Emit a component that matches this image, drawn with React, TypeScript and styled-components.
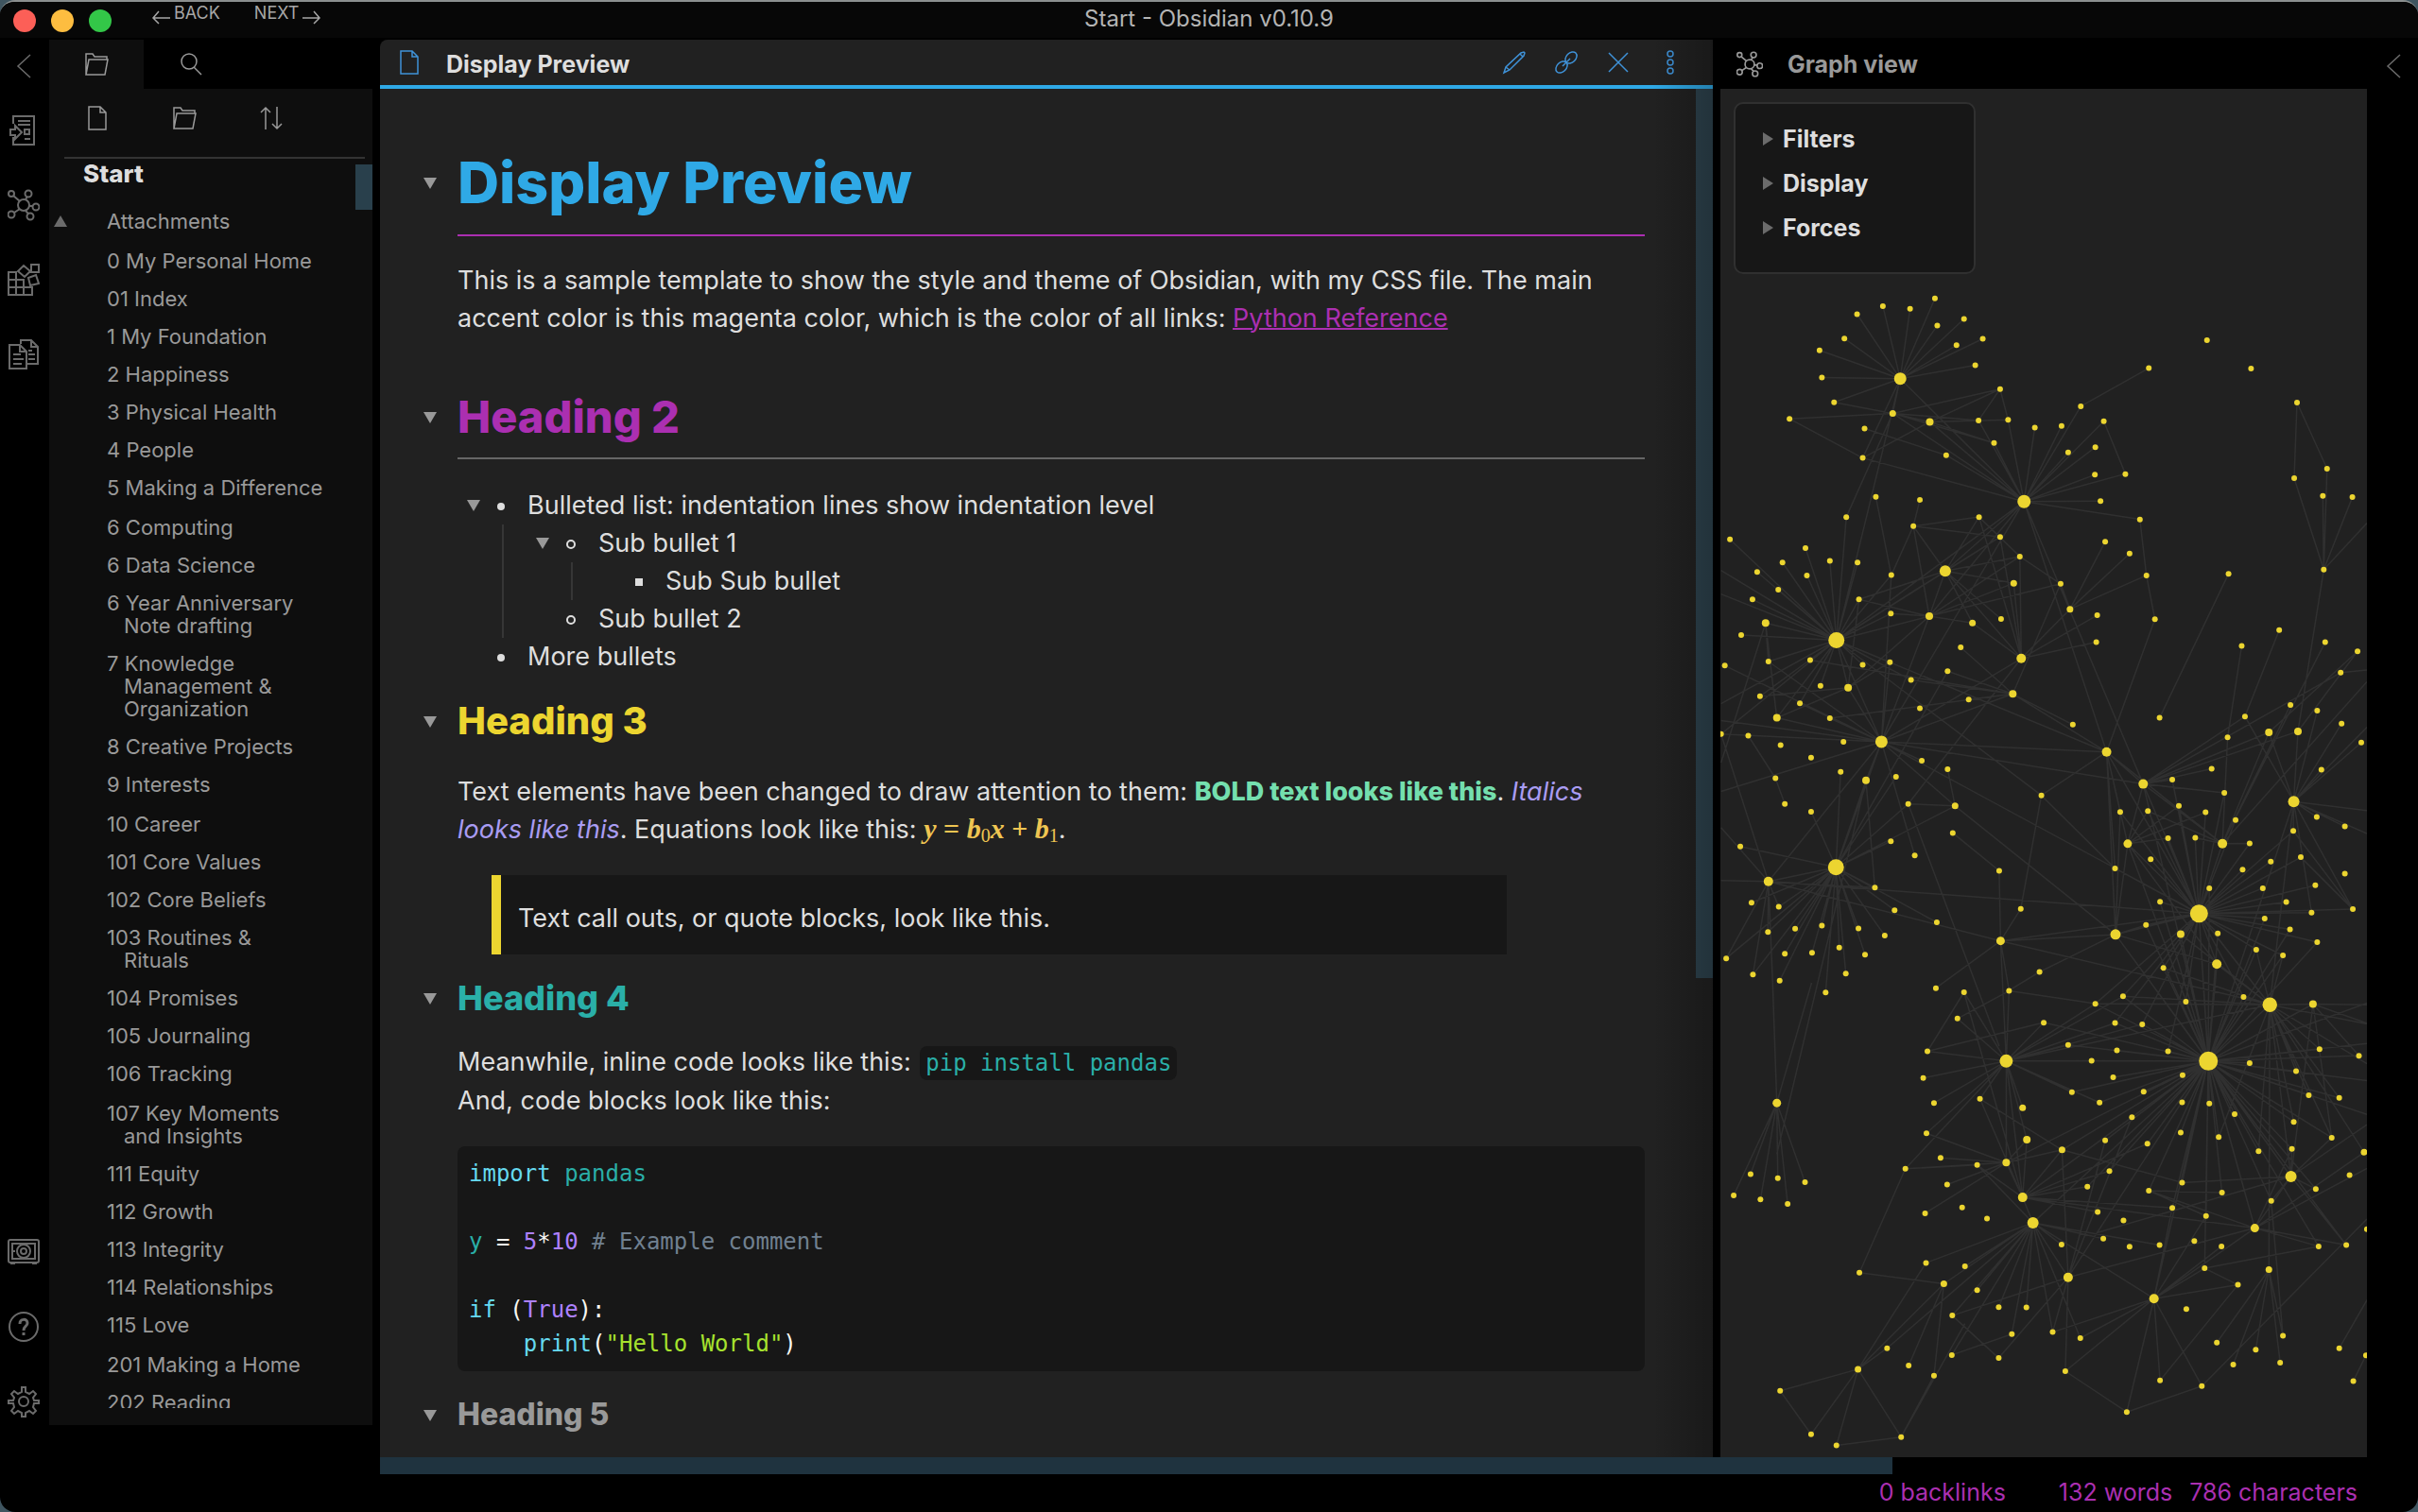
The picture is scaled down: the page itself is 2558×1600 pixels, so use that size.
import React from "react";
import styled, { createGlobalStyle } from "styled-components";

const color = {
  pane: "#212121",
  side: "#0e0e0e",
  inset: "#171717",
  text: "#dedede",
  muted: "#999999",
  icon: "#6b6b6b",
  blue: "#2fa9e6",
  action: "#3f92d8",
  magenta: "#ab2fb1",
  yellow: "#ecd530",
  teal: "#2aafa8",
  thumb: "#293b45",
};

const Global = createGlobalStyle`
  * { box-sizing: border-box; }
  html, body, #root { height: 100%; margin: 0; }
  body {
    background: #3f5560;
    color: ${color.text};
    font-family: Inter, "Noto Sans", sans-serif;
    font-size: 25px;
    overflow: hidden;
  }
  button {
    margin: 0;
    padding: 0;
    border: 0;
    background: none;
    color: inherit;
    font: inherit;
    cursor: pointer;
  }
  svg { display: block; }
`;

/* ---------- window ---------- */

const Window = styled.div`
  display: flex;
  flex-direction: column;
  height: 100vh;
  background: #000;
  border-top: 2px solid #8b8f8f;
  border-radius: 16px;
  overflow: hidden;
`;

const TitleBar = styled.header`
  display: grid;
  grid-template-columns: 1fr auto 1fr;
  height: 38px;
  flex: none;
  background: #070707;
`;

const TitleLeft = styled.div`
  display: flex;
  align-items: flex-start;
  padding-left: 14px;
`;

const Lights = styled.div`
  display: flex;
  gap: 16px;
  padding: 8px 42px 0 0;
`;

const Light = styled.button<{ $fill: string }>`
  width: 24px;
  height: 24px;
  border-radius: 50%;
  background: ${(p) => p.$fill};
`;

const NavButton = styled.button`
  display: flex;
  align-items: flex-start;
  gap: 4px;
  margin-right: 36px;
  color: #a6a6a6;
  font-size: 18px;
  line-height: 24px;
  svg { margin-top: 8px; }
`;

const WindowTitle = styled.div`
  color: #b4b4b4;
  font-size: 24px;
  line-height: 36px;
`;

const Body = styled.div`
  display: flex;
  flex: 1;
  gap: 8px;
  min-height: 0;
  padding-top: 2px;
`;

/* ---------- ribbons and file pane ---------- */

const LeftDock = styled.div`
  display: flex;
  width: 394px;
  flex: none;
`;

const Ribbon = styled.nav`
  display: flex;
  flex-direction: column;
  align-items: center;
  width: 52px;
  flex: none;
  padding: 0 2px 20px 0;
  color: ${color.icon};
`;

const RibbonButton = styled.button`
  display: grid;
  place-items: center;
  width: 100%;
  height: 79px;
`;

const RibbonToggle = styled.button`
  display: grid;
  place-items: center;
  width: 100%;
  height: 56px;
`;

const Spacer = styled.div`
  flex: 1;
`;

const FilePane = styled.aside`
  display: flex;
  flex: 1;
  flex-direction: column;
  min-width: 0;
  margin-bottom: 34px;
  color: ${color.muted};
`;

const Tabs = styled.div`
  display: flex;
  height: 52px;
  flex: none;
`;

const Tab = styled.button<{ $active?: boolean }>`
  display: grid;
  place-items: center;
  width: 100px;
  background: ${(p) => (p.$active ? color.side : "transparent")};
`;

const PaneBody = styled.div`
  display: flex;
  flex: 1;
  flex-direction: column;
  min-height: 0;
  padding-bottom: 18px;
  background: ${color.side};
`;

const PaneTools = styled.div`
  display: flex;
  gap: 66px;
  height: 74px;
  flex: none;
  margin: 0 8px 0 16px;
  padding: 18px 22px 0;
  border-bottom: 2px solid #333;
`;

const Tool = styled.button`
  display: grid;
  place-items: center;
  width: 26px;
  height: 26px;
`;

const FileScroll = styled.div`
  display: flex;
  flex: 1;
  align-items: flex-start;
  min-height: 0;
  overflow: hidden;
`;

const Tree = styled.div`
  flex: 1;
  min-width: 0;
`;

const VaultName = styled.h2`
  margin: 0 0 0 36px;
  color: ${color.text};
  font-size: 26px;
  font-weight: 800;
  line-height: 32px;
`;

const FileList = styled.ul`
  margin: 14px 0 0;
  padding: 0;
  list-style: none;
`;

const FileRow = styled.li`
  display: flex;
  align-items: flex-start;
  padding: 8px 0 8px 5px;
  &:nth-child(13n + 2), &:nth-child(13n + 9) { margin-top: 2px; }
`;

const Twisty = styled.span`
  display: flex;
  align-items: center;
  width: 74px;
  height: 24px;
  flex: none;
  color: ${color.icon};
`;

const FileName = styled.button`
  width: 230px;
  font-size: 22px;
  line-height: 24px;
  text-align: left;
  text-indent: -18px;
  white-space: pre-line;
`;

const SideThumb = styled.div`
  width: 18px;
  height: 48px;
  flex: none;
  margin-top: 6px;
  background: #29404c;
`;

/* ---------- note pane ---------- */

const NotePane = styled.main`
  position: relative;
  display: flex;
  flex: 1;
  flex-direction: column;
  min-width: 0;
  background: ${color.pane};
  border-top-left-radius: 8px;
  overflow: hidden;
`;

const EdgeShade = styled.div`
  position: absolute;
  top: 0;
  right: 0;
  bottom: 0;
  width: 64px;
  background: linear-gradient(90deg, rgba(0, 0, 0, 0), rgba(0, 0, 0, 0.24));
  pointer-events: none;
`;

const NoteHeader = styled.header`
  display: flex;
  align-items: center;
  height: 52px;
  flex: none;
  padding: 0 32px 0 21px;
  border-bottom: 4px solid ${color.blue};
  color: ${color.action};
`;

const NoteTitle = styled.div`
  flex: 1;
  margin-left: 29px;
  padding-top: 4px;
  color: ${color.text};
  font-weight: 700;
  line-height: 32px;
`;

const NoteActions = styled.div`
  display: flex;
  gap: 29px;
`;

const NoteScroll = styled.div`
  display: flex;
  flex: 1;
  min-height: 0;
  overflow: hidden;
`;

const NoteThumb = styled.div`
  width: 18px;
  height: 65%;
  flex: none;
  background: #2d424d;
`;

const Article = styled.article`
  flex: 1;
  min-width: 0;
  padding: 59px 54px 0 82px;
  font-size: 27px;
  line-height: 40px;
`;

const headingStyles = {
  1: { size: 61, line: 80, tone: color.blue, top: 0 },
  2: { size: 47, line: 60, tone: color.magenta, top: 54 },
  3: { size: 40, line: 48, tone: color.yellow, top: 24 },
  4: { size: 36, line: 44, tone: color.teal, top: 24 },
  5: { size: 32, line: 44, tone: color.muted, top: 24 },
};

type Level = keyof typeof headingStyles;

const HeadingRow = styled.div<{ $level: Level }>`
  display: flex;
  align-items: center;
  margin-top: ${(p) => headingStyles[p.$level].top}px;
  margin-left: -36px;
  color: ${(p) => headingStyles[p.$level].tone};
  font-size: ${(p) => headingStyles[p.$level].size}px;
  font-weight: 800;
  line-height: ${(p) => headingStyles[p.$level].line}px;
`;

const HeadingText = styled.div`
  h1, h2, h3, h4, h5 { margin: 0; font: inherit; }
`;

const Fold = styled.button`
  display: flex;
  align-items: center;
  width: 36px;
  flex: none;
  padding-top: 2px;
  color: ${color.muted};
`;

const Rule = styled.hr<{ $tone: string; $gap: number }>`
  height: 2px;
  margin: ${(p) => p.$gap}px 0 0;
  border: 0;
  background: ${(p) => p.$tone};
`;

const Paragraph = styled.p<{ $top: number }>`
  margin: ${(p) => p.$top}px 0 0;
`;

const NoteLink = styled.a`
  color: ${color.magenta};
  text-decoration: underline;
  text-decoration-thickness: 2px;
`;

const Strong = styled.strong`
  color: #74dfae;
  font-weight: 800;
`;

const Em = styled.em`
  color: #a99cf3;
`;

const Equation = styled.span`
  color: #efc552;
  font-family: "Liberation Serif", serif;
  font-size: 30px;
  font-weight: 700;
  line-height: 36px;
  sub { font-size: 20px; font-weight: 400; line-height: 0; vertical-align: -4px; }
`;

const BulletList = styled.ul<{ $root?: boolean }>`
  margin: ${(p) => (p.$root ? "29px 0 0 46px" : "0 0 0 -27px")};
  padding: 0 0 0 ${(p) => (p.$root ? 0 : 70)}px;
  border-left: ${(p) => (p.$root ? 0 : 2)}px solid #363636;
  list-style: none;
`;

const Bullet = styled.li`
  padding-left: 28px;
`;

const BulletLine = styled.div`
  display: flex;
  align-items: center;
  margin-left: -64px;
`;

const BulletFold = styled.button`
  display: flex;
  width: 32px;
  height: 40px;
  align-items: center;
  color: ${color.muted};
`;

const Marker = styled.span<{ $kind: "disc" | "ring" | "square" }>`
  width: ${(p) => (p.$kind === "ring" ? 10 : 8)}px;
  height: ${(p) => (p.$kind === "ring" ? 10 : 8)}px;
  margin: 2px 24px 0 0;
  border: ${(p) => (p.$kind === "ring" ? 2 : 0)}px solid ${color.text};
  border-radius: ${(p) => (p.$kind === "square" ? 0 : 50)}%;
  background: ${(p) => (p.$kind === "ring" ? "transparent" : color.text)};
`;

const Quote = styled.blockquote`
  width: 1074px;
  max-width: 100%;
  margin: 28px 0 0 36px;
  padding: 26px 18px 18px;
  border-left: 10px solid ${color.yellow};
  background: ${color.inset};
`;

const mono = `"DejaVu Sans Mono", monospace`;

const InlineCode = styled.code`
  margin: 0 2px;
  padding: 4px 6px;
  border-radius: 8px;
  background: ${color.inset};
  color: ${color.teal};
  font-family: ${mono};
  font-size: 24px;
`;

const CodeBlock = styled.pre`
  margin: 28px 0 0;
  padding: 11px 12px;
  border-radius: 8px;
  background: ${color.inset};
  color: #f8f8f2;
  font-family: ${mono};
  font-size: 24px;
  line-height: 36px;
`;

const Token = styled.span<{ $tone: string }>`
  color: ${(p) => p.$tone};
`;

/* ---------- graph pane ---------- */

const GraphPane = styled.section`
  display: flex;
  flex-direction: column;
  width: 684px;
  flex: none;
`;

const GraphHeader = styled.header`
  display: flex;
  align-items: center;
  gap: 26px;
  height: 52px;
  flex: none;
  padding-left: 17px;
  color: ${color.muted};
  font-weight: 700;
`;

const GraphCanvas = styled.div`
  position: relative;
  flex: 1;
  min-height: 0;
  background: ${color.pane};
  overflow: hidden;
`;

const GraphControls = styled.div`
  position: absolute;
  top: 14px;
  left: 14px;
  display: flex;
  flex-direction: column;
  width: 256px;
  padding: 13px 28px 24px;
  border: 2px solid #303030;
  border-radius: 10px;
  background: ${color.inset};
`;

const ControlButton = styled.button`
  display: flex;
  align-items: center;
  gap: 8px;
  height: 47px;
  font-weight: 700;
  text-align: left;
  svg { color: ${color.icon}; }
`;

const RightRibbon = styled.nav`
  width: 46px;
  flex: none;
  padding-right: 6px;
  color: ${color.icon};
`;

/* ---------- footer ---------- */

const Footer = styled.footer`
  flex: none;
  height: 58px;
`;

const WideThumb = styled.div`
  width: 1600px;
  max-width: calc(100% - 402px);
  height: 18px;
  margin-left: 402px;
  background: #1f333f;
`;

const Status = styled.div`
  display: flex;
  justify-content: flex-end;
  padding-right: 64px;
  color: ${color.magenta};
  line-height: 38px;
`;

const StatusItem = styled.span<{ $gap: number }>`
  margin-left: ${(p) => p.$gap}px;
`;

/* ---------- icons ---------- */

type IconProps = { size?: number; w?: number; box?: string; children: React.ReactNode; h?: number };

const Icon = ({ size = 24, w = 2, box, h, children }: IconProps) => (
  <svg
    width={size}
    height={h ?? size}
    viewBox={box ?? `0 0 ${size} ${h ?? size}`}
    fill="none"
    stroke="currentColor"
    strokeWidth={w}
    aria-hidden="true"
  >
    {children}
  </svg>
);

const Triangle = ({ dir }: { dir: "down" | "up" | "right" }) => (
  <svg width="14" height="14" viewBox="0 0 14 14" fill="currentColor" aria-hidden="true">
    <path d={{ down: "M0 1h14L7 13z", up: "M0 13h14L7 1z", right: "M1 0v14l11-7z" }[dir]} />
  </svg>
);

const FileIcon = () => (
  <Icon size={20} h={26} w={1.5}>
    <path d="M1 1h12l6 6v18H1zM13 1v6h6" />
  </Icon>
);

const FolderIcon = () => (
  <Icon size={26} w={1.5}>
    <path d="M2 24V2h7l2 3h13v3M2 24 5 8h20l-3 16z" />
  </Icon>
);

const ChevronLeft = () => (
  <Icon size={16} h={26} w={1.5}>
    <path d="M15 1 2 13l13 12" />
  </Icon>
);

const NetworkIcon = ({ size = 34, w = 2 }: { size?: number; w?: number }) => (
  <Icon size={size} box="0 0 34 34" w={w}>
    <circle cx="17" cy="17" r="6" />
    <circle cx="4" cy="5" r="3" />
    <circle cx="22" cy="5" r="3.500" />
    <circle cx="30" cy="19" r="3.500" />
    <circle cx="24" cy="29" r="3.500" />
    <circle cx="4" cy="27" r="3.500" />
    <path d="m6 7 7 6M21 8l-2 3M23 18h4M19 23l3 3M7 25l6-4" />
  </Icon>
);

const ribbonTop = [
  {
    label: "Open quick switcher",
    art: (
      <Icon size={34}>
        <path d="M6 10V2h22v30H6v-8M11 7h13M11 11h13M18 26h6M18 16h5v5h-5zM3 16h5v-4l7 7-7 7v-4H3z" />
      </Icon>
    ),
  },
  { label: "Open graph view", art: <NetworkIcon /> },
  {
    label: "Insert template",
    art: (
      <Icon size={34}>
        <path d="M1 9h8v24H1zM1 17h16v16M1 25h25v8H1M17 33V17M25 1h8v8h-8zM17 2l7 6-6 6-7-6zM22 15l8-3 3 9-9 2z" />
      </Icon>
    ),
  },
  {
    label: "Open notes side by side",
    art: (
      <Icon size={34}>
        <path d="M2 7h11l7 7v18H2zM13 7v7h7M6 17h8M6 22h11M6 27h9M14 6V2h11l7 7v18H20M25 2v7h7M22 13h4M22 17h7M22 22h7" />
      </Icon>
    ),
  },
];

const ribbonBottom = [
  {
    label: "Open another vault",
    art: (
      <Icon size={34} h={28}>
        <rect x="1" y="1" width="32" height="24" rx="2" />
        <path d="M5 5h24v16H5zM3 26h5M26 26h5M5 13h3" />
        <circle cx="17" cy="13" r="7" />
        <circle cx="17" cy="13" r="3" />
      </Icon>
    ),
  },
  {
    label: "Help",
    art: (
      <Icon size={34}>
        <circle cx="17" cy="17" r="15" />
        <path d="M13 14c0-6 8-6 8-1 0 4-4 3-4 8M17 23v3" strokeWidth="3" />
      </Icon>
    ),
  },
  {
    label: "Settings",
    art: (
      <Icon size={34}>
        <circle cx="17" cy="17" r="5" />
        <path d="M15 2h4v5l4 2 4-3 3 3-3 4 1 3h5v3h-5l-1 4 3 4-3 3-4-3-4 2v4h-4v-4l-4-2-4 3-3-3 3-4-1-4H1v-3h5l1-3-3-4 3-3 4 3 4-2z" />
      </Icon>
    ),
  },
];

const noteActions = [
  {
    label: "Edit",
    art: (
      <Icon size={26} w={1.5}>
        <path d="M2 24 4 18 20 3l3-1 1 1-1 3L8 21zM19 4l3 3M4 18l4 3" />
      </Icon>
    ),
  },
  {
    label: "Copy link",
    art: (
      <Icon size={26} w={1.5}>
        <ellipse cx="18" cy="8" rx="7" ry="5" transform="rotate(-45 18 8)" />
        <ellipse cx="8" cy="18" rx="7" ry="5" transform="rotate(-45 8 18)" />
        <path d="m9 17 8-8" />
      </Icon>
    ),
  },
  {
    label: "Close",
    art: (
      <Icon size={26} w={1.5}>
        <path d="m3 3 20 20M23 3 3 23" />
      </Icon>
    ),
  },
  {
    label: "More options",
    art: (
      <Icon size={26} w={1.5}>
        <circle cx="13" cy="4" r="3" />
        <circle cx="13" cy="13" r="3" />
        <circle cx="13" cy="22" r="3" />
      </Icon>
    ),
  },
];

/* ---------- graph data ---------- */

// Each cluster keeps its points in layout units; scale turns them into canvas pixels.
// Node: "x,y" or "x,y,r". Link: "x,y: x,y x,y ...". Reach: a hub joined to all nodes near it.
type Cluster = { top: number; nodes: string; links: string[] };

const SCALE_X = 0.4962;
const SCALE_Y = 0.3571;

const clusters: Cluster[] = [
  {
    top: -94,
    nodes:
      "538,884 427,907 485,915 372,931 600,945 543,965 640,1004 345,1003 584,1023 292,1038 624,1082 464,1122,6.5 297,1119 677,1153 323,1192 448,1225,3.5 228,1241 527,1250,4 631,1246 694,1244 751,1267 808,1262 849,1204 898,1248 388,1270 664,1313 562,1349 822,1341 880,1325 384,1357 1118,1008 994,1091 1212,1092 1310,1193 1374,1389",
    links: [
      "464,1122: 538,884 427,907 485,915 372,931 600,945 543,965 640,1004 345,1003 584,1023 292,1038 624,1082 297,1119 323,1192 448,1225 384,1357 728,1486 328,1897",
      "728,1486: 448,1225 527,1250 562,1349 664,1313 694,1244 631,1246 751,1267 808,1262 849,1204 898,1248 822,1341 880,1325 880,1406 944,1404 891,1485 384,1357 975,1539 464,1122",
      "448,1225: 228,1241 323,1192 677,1153 631,1246 527,1250 664,1313 349,1532",
      "527,1250: 677,1153 631,1246 694,1244 664,1313 384,1357",
      "677,1153: 631,1246 694,1244",
      "228,1241: 384,1357",
      "388,1270: 562,1349",
      "898,1248: 944,1404",
      "849,1204: 994,1091",
      "1310,1193: 1304,1417 1374,1389",
    ],
  },
  {
    top: 406,
    nodes:
      "879,6 944,5 1304,17 1365,69 1428,73 728,86,7 891,85 412,72 506,81 349,132 632,132 492,159 975,139 101,198 677,191 901,205 262,224 953,240 719,249 314,262 213,267 373,267 560,292,6 159,295 265,305 445,304 1367,288 1164,300 989,305 706,328,3.5 806,330 204,347 149,376 376,376 826,405,3.5 884,423 444,418 526,426,4 679,434 618,446,3.5 177,446,4 1007,435 328,497,8.5 125,482 1272,467 882,503 1192,514 1370,503 1439,530 593,518 722,551,5 272,556 183,560 442,562 90,572 384,570 565,589 1403,593 487,615 294,632 353,638,4 704,656,4 165,663 250,684 610,673 1296,689 506,699 1353,706 314,728 201,727,4 1017,727 1199,723 832,747 1405,744 1250,770,4 1312,767,4 82,775 140,780 1162,785 343,798 424,798,6.5 1447,800 209,808 904,828,5 274,845 510,854 565,879 1128,878 1362,881 337,887 455,902 198,906 391,912,4 1044,910 982,923,5 1155,949 765,957 1303,975,6 218,982 481,982 581,988,3.5 1058,988 992,1003 274,1005 933,1006 1115,1007 1352,1021 1179,1030 1412,1049 1302,1062 576,1068 1093,1082 1035,1084 444,1093 949,1100,4.5 1151,1100,5 1209,1099 123,1108 495,1135 1318,1140 998,1146 1254,1153 327,1170,8.5 922,1173 1194,1177 675,1180 1412,1189 183,1212,5 1349,1223 410,1230 1123,1232 1237,1232 1018,1272 1287,1273 147,1275 205,1287 721,1293 1429,1294 452,1297 1341,1304 1101,1307,9.5 1241,1322 542,1333 988,1341 297,1343 240,1352 375,1351 1295,1354 182,1362 1141,1366 923,1369,5.5 1062,1368,4 431,1372 678,1388,4.5 1353,1392 334,1408 1223,1414 276,1423 218,1426 389,1429 1280,1431 93,1440 1139,1457,5 1025,1468 761,1480 348,1485 150,1488 207,1506",
    links: [
      "728,86: 526,426 904,828 982,923 328,497 424,798",
      "560,292: 492,159 632,132 677,191 719,249 706,328 679,434 618,446 526,426 722,551 328,497 728,86 376,376",
      "328,497: 101,198 262,224 213,267 314,262 373,267 159,295 265,305 445,304 204,347 149,376 376,376 177,446 125,482 183,560 272,556 82,685 82,775 82,290 82,360 349,132 526,426 444,418 384,570 353,638 424,798 294,632 250,684 201,727 442,562 904,828 165,663 765,957 677,191 487,615",
      "526,426: 444,418 376,376 706,328 719,249 618,446 353,638 806,330 492,159 424,798",
      "492,159: 632,132 677,191 506,81 445,304",
      "412,72: 445,304",
      "722,551: 719,249 706,328 826,405 884,423 882,503 618,446 677,191 632,132 481,982 424,798",
      "704,656: 593,518 565,589 487,615 610,673 806,330 832,747 904,828 272,556 314,728",
      "719,249: 632,132 806,330",
      "424,798: 353,638 250,684 314,728 201,727 82,775 82,735 183,560 510,854 391,912 904,828 982,923 704,656 445,304 442,562 82,945 328,1170 1101,1307 581,988 495,1135 90,572",
      "353,638: 165,663 201,727 376,376 442,562",
      "177,446: 183,560 201,727 328,497 82,860",
      "327,1170: 391,912 337,887 274,1005 481,982 581,988 444,1093 123,1108 410,1230 452,1297 147,1275 205,1287 182,1362 240,1352 297,1343 375,1351 431,1372 218,1426 276,1423 334,1408 389,1429 348,1485 150,1488 207,1506 305,1541 93,1440 183,1212 542,1333 455,902 565,589",
      "183,1212: 678,1388 1101,1307 82,775 82,1052 82,1209 182,1362 410,1230 424,798",
      "183,1212: 93,1440 150,1488 192,1512 205,1287",
      "391,912: 410,1230 201,2020",
      "198,906: 218,982 140,780",
      "481,982: 581,988 675,1700",
      "581,988: 565,879 923,1369",
      "576,1068: 675,1180",
      "675,1180: 678,1388",
      "678,1388: 923,1369 1101,1307 540,1528 721,1293 696,1535 1252,1577 690,1744",
      "765,957: 904,828 721,1293 922,1173",
      "904,828: 1007,435 982,923 922,1173 923,1369 933,1006 949,1100 1101,1307 1151,1100",
      "982,923: 1199,723 1250,770 1312,767 1128,878 1044,910 1155,949 949,1100 1151,1100 1121,1744 1403,593",
      "1303,975: 1199,723 1250,770 1312,767 1362,881 1447,800 1405,744 1353,706 1352,1021 1412,1049 1302,1062 1459,1002 1459,1070 1252,1577 1121,1744 1459,755 1341,1304",
      "1367,288: 1304,17 1365,69 1428,73 1374,-11 1459,150 1312,767",
      "1164,300: 1017,727",
      "1192,514: 1162,785",
      "1272,467: 1199,723",
      "1439,530: 1312,767 1250,770",
      "1370,503: 1151,1100",
      "826,405: 901,205 953,240 989,305 806,330",
      "989,305: 1007,435 975,139",
      "1403,593: 1459,585",
      "949,1100: 1035,1084 1058,988 1115,1007 992,1003 933,1006 923,1369 1139,1457",
      "1151,1100: 1162,785 1250,770 1093,1082 1209,1099 1296,689 992,1003 1459,620",
      "923,1369: 949,1100 988,1341 933,1006 1139,1457 761,1480 1101,1307",
      "1429,1294: 1302,1062 1318,1140 1303,975 1101,1307",
      "761,1480: 696,1535",
    ],
  },
  {
    top: 946,
    nodes:
      "305,29 540,16 600,28 696,24 939,40 880,62 1073,56 1196,42 1252,65,7.7 1344,63,4 586,106 770,118 922,119 980,123 822,184 1358,197 522,203 926,200 1035,203 1442,216 690,232,7 872,231 1121,232,10 1209,238 1308,262 1066,274 513,282 918,280 830,324 983,323 1335,333 536,356 634,344 201,356,4.5 889,355 1065,354 1123,358 1400,341 725,370,3.5 1177,389 958,398 1303,412 520,446 1062,444 734,465,4 901,467 1143,457 1384,459 809,495,3.5 991,477 1299,492 1228,499 1453,502,3.5 550,519 690,533,4 628,540 475,551 910,558 145,567 1297,574,6 1422,570 203,579 261,591 1065,592 564,598 863,604 1350,611 994,616 109,630 725,636,5 1150,622 166,642 1255,646 224,655 596,666 1044,667 517,683 885,679 1116,691 649,699 940,704 747,711,6 1220,727,4.5 1459,730 897,758 808,776 1091,765 953,782 1017,777 1149,781 1356,781 1415,777 519,830 602,840 1113,846 1250,850,3.5 377,859 557,892,3.5 822,873,5 1184,895 628,911 1005,936,5 674,961 733,962 1074,967 575,986 789,1035 702,1041 848,1053 1280,1046 1139,1066 436,1083 1222,1087 1400,1083 1457,1104 574,1103 674,1112 1274,1126 482,1134 1174,1131 374,1145,3.5 816,1151 536,1164 1430,1180 1018,1178 1107,1195 208,1209 947,1272 274,1338 466,1346 328,1371",
    links: [
      "690,232: 600,28 696,24 586,106 522,203 513,282 536,356 770,118 880,62 822,184 872,231 939,40 830,324 889,355 725,370 634,344 734,465 690,533 725,636 1121,232 520,446 980,123 922,119 475,551",
      "725,636: 690,533 734,465 628,540 863,604 910,558 885,679 747,711 1121,232 809,495 1044,667 1220,727 600,28 634,344 991,477 690,232",
      "747,711: 519,830 602,840 557,892 628,911 674,961 733,962 702,1041 789,1035 848,1053 822,873 808,776 575,986 574,1103 897,758 1017,777 436,1083 628,540",
      "822,873: 809,495 901,467 958,398 1220,727 575,986 674,1112 816,1151 1121,232 789,1035",
      "1005,936: 1184,895 1113,846 1116,691 1121,232 1149,781 1220,727 789,1035 848,1053 816,1151 947,1272 1018,1178 1107,1195 747,711 1044,667",
      "374,1145: 208,1209 274,1338 328,1371 466,1346 436,1083 557,892 519,830",
      "208,1209: 274,1338",
      "328,1371: 466,1346",
      "466,1346: 536,1164 602,1010",
      "377,859: 475,551 557,892",
      "475,551: 690,533 628,540",
      "690,533: 520,446 550,519 564,598 517,683 1121,232 734,465 809,495",
      "557,892: 482,1134 536,1164 747,711",
      "575,986: 674,1112",
      "574,1103: 702,1041",
      "522,203: 770,118 600,28",
      "586,106: 696,24",
      "696,24: 880,62",
      "816,1151: 947,1272",
      "947,1272: 1107,1195",
      "1107,1195: 1459,700",
      "1113,846: 1184,895 1356,781 1121,232",
      "1184,895: 1018,1178",
      "1250,850: 1139,1066 1174,1131 1222,1087 1274,1126 1280,1046 1252,65",
      "1255,646: 1280,1046",
      "1220,727: 1297,574 1356,781 1415,777 1459,550 1453,502 1299,492",
      "1297,574: 1255,646 1350,611 1384,459 1065,592 1121,232 1252,65 1344,63 1459,420 1415,777 1299,492 885,740",
      "994,616: 1150,622 1116,691 1220,727",
      "809,495: 1065,592 634,344",
      "201,356: 145,567 203,579 261,591 109,630 166,642 224,655 192,0 275,0",
      "1430,1180: 1457,1104",
      "1400,1083: 1459,940",
      "1344,63: 1459,65 1459,120 1442,216 1252,65 1384,459",
      "1252,65: 1459,122 1358,197 1400,341 1335,333 1308,262 1303,412 939,40 880,62 1196,42 1384,459 1453,502 1228,499 1143,457 1101,-205 690,232 1139,-55 1062,-144 1459,240 1223,-98 1280,-81 1025,-44",
      "1121,232: 1459,180 1459,290 1459,390 1459,60 1384,459 1415,777 1356,781 1101,-205 1139,-55 1062,-144 949,-412 923,-143 1303,-537 747,711 1220,727",
    ],
  },
];

const hubs = [
  { x: 506, y: 873, reach: 150 },
  { x: 516, y: 1029, reach: 185 },
];

type Dot = { x: number; y: number; r: number };

const project = (pair: string, top: number): Dot => {
  const [x, y, r = 3] = pair.split(",").map(Number);
  return { x: x * SCALE_X - 40, y: y * SCALE_Y + top, r };
};

const dots = clusters.flatMap((c) => c.nodes.split(" ").map((n) => project(n, c.top)));

const segment = (a: Dot, b: Dot) =>
  `M${a.x.toFixed(1)} ${a.y.toFixed(1)}L${b.x.toFixed(1)} ${b.y.toFixed(1)}`;

const linkPath = clusters
  .flatMap((c) =>
    c.links.flatMap((row) => {
      const [from, to] = row.split(": ");
      return to.split(" ").map((t) => segment(project(from, c.top), project(t, c.top)));
    })
  )
  .concat(
    hubs.flatMap((h) =>
      dots
        .filter((d) => Math.hypot(d.x - h.x, d.y - h.y) < h.reach)
        .map((d) => segment({ ...h, r: 0 }, d))
    )
  )
  .join("");

const Graph = () => (
  <svg width="684" height="1448" role="img" aria-label="Graph of notes">
    <path d={linkPath} stroke="#303030" strokeWidth="1.500" fill="none" />
    {dots.map((d, i) => (
      <circle key={i} cx={d.x} cy={d.y} r={d.r} fill={color.yellow} />
    ))}
  </svg>
);

/* ---------- content ---------- */

const files = [
  "Attachments", "0 My Personal Home", "01 Index", "1 My Foundation", "2 Happiness",
  "3 Physical Health", "4 People", "5 Making a Difference", "6 Computing", "6 Data Science",
  "6 Year Anniversary\nNote drafting", "7 Knowledge\nManagement &\nOrganization",
  "8 Creative Projects", "9 Interests", "10 Career", "101 Core Values", "102 Core Beliefs",
  "103 Routines &\nRituals", "104 Promises", "105 Journaling", "106 Tracking",
  "107 Key Moments\nand Insights", "111 Equity", "112 Growth", "113 Integrity",
  "114 Relationships", "115 Love", "201 Making a Home", "202 Reading",
];

const FileLabel = ({ name }: { name: string }) => {
  const [first, ...rest] = name.split("\n");
  return (
    <FileName>
      {first}
      {rest.map((line) => (
        <HangingLine key={line}>{line}</HangingLine>
      ))}
    </FileName>
  );
};

const HangingLine = styled.span`
  display: block;
  text-indent: 0;
`;

const Heading = ({ level, children }: { level: Level; children: string }) => {
  const Tag = `h${level}` as "h1";
  return (
    <HeadingRow $level={level}>
      <Fold aria-label={`Fold ${children}`}>
        <Triangle dir="down" />
      </Fold>
      <HeadingText>
        <Tag>{children}</Tag>
      </HeadingText>
    </HeadingRow>
  );
};

type ItemProps = {
  kind: "disc" | "ring" | "square";
  text: string;
  foldable?: boolean;
  children?: React.ReactNode;
};

const Item = ({ kind, text, foldable, children }: ItemProps) => (
  <Bullet>
    <BulletLine>
      <BulletFold aria-label={`Fold ${text}`}>{foldable && <Triangle dir="down" />}</BulletFold>
      <Marker $kind={kind} />
      {text}
    </BulletLine>
    {children}
  </Bullet>
);

export default function App() {
  return (
    <>
      <Global />
      <Window>
        <TitleBar>
          <TitleLeft>
            <Lights>
              <Light $fill="#fc5f57" aria-label="Close window" />
              <Light $fill="#fdbd40" aria-label="Minimize window" />
              <Light $fill="#33c748" aria-label="Zoom window" />
            </Lights>
            <NavButton>
              <Icon size={20} h={16} w={1.5}>
                <path d="M20 9H2M8 2 2 9l6 6" />
              </Icon>
              BACK
            </NavButton>
            <NavButton>
              NEXT
              <Icon size={20} h={16} w={1.5}>
                <path d="M0 9h18M12 2l6 7-6 6" />
              </Icon>
            </NavButton>
          </TitleLeft>
          <WindowTitle>Start - Obsidian v0.10.9</WindowTitle>
        </TitleBar>

        <Body>
          <LeftDock>
            <Ribbon>
              <RibbonToggle aria-label="Collapse left sidebar">
                <ChevronLeft />
              </RibbonToggle>
              {ribbonTop.map((r) => (
                <RibbonButton key={r.label} aria-label={r.label}>
                  {r.art}
                </RibbonButton>
              ))}
              <Spacer />
              {ribbonBottom.map((r) => (
                <RibbonButton key={r.label} aria-label={r.label}>
                  {r.art}
                </RibbonButton>
              ))}
            </Ribbon>
            <FilePane>
              <Tabs>
                <Tab $active aria-label="Files">
                  <FolderIcon />
                </Tab>
                <Tab aria-label="Search">
                  <Icon size={26} w={1.5}>
                    <circle cx="11" cy="10" r="8" />
                    <path d="m16 16 8 8" />
                  </Icon>
                </Tab>
              </Tabs>
              <PaneBody>
                <PaneTools>
                  <Tool aria-label="New note">
                    <FileIcon />
                  </Tool>
                  <Tool aria-label="New folder">
                    <FolderIcon />
                  </Tool>
                  <Tool aria-label="Change sort order">
                    <Icon size={26} w={1.5}>
                      <path d="M7 25V2M2 7l5-5 5 5M19 1v23M14 19l5 5 5-5" />
                    </Icon>
                  </Tool>
                </PaneTools>
                <FileScroll>
                  <Tree>
                    <VaultName>Start</VaultName>
                    <FileList>
                      {files.map((name, i) => (
                        <FileRow key={name}>
                          <Twisty>{i === 0 && <Triangle dir="up" />}</Twisty>
                          <FileLabel name={name} />
                        </FileRow>
                      ))}
                    </FileList>
                  </Tree>
                  <SideThumb />
                </FileScroll>
              </PaneBody>
            </FilePane>
          </LeftDock>

          <NotePane>
            <NoteHeader>
              <FileIcon />
              <NoteTitle>Display Preview</NoteTitle>
              <NoteActions>
                {noteActions.map((a) => (
                  <button key={a.label} aria-label={a.label}>
                    {a.art}
                  </button>
                ))}
              </NoteActions>
            </NoteHeader>
            <NoteScroll>
              <Article>
                <Heading level={1}>Display Preview</Heading>
                <Rule $tone={color.magenta} $gap={15} />
                <Paragraph $top={27}>
                  This is a sample template to show the style and theme of Obsidian, with my CSS
                  file. The main
                  <br />
                  accent color is this magenta color, which is the color of all
                  links: <NoteLink href="#python">Python Reference</NoteLink>
                </Paragraph>

                <Heading level={2}>Heading 2</Heading>
                <Rule $tone="#666" $gap={13} />
                <BulletList $root>
                  <Item
                    kind="disc"
                    foldable
                    text="Bulleted list: indentation lines show indentation level"
                  >
                    <BulletList>
                      <Item kind="ring" foldable text="Sub bullet 1">
                        <BulletList>
                          <Item kind="square" text="Sub Sub bullet" />
                        </BulletList>
                      </Item>
                      <Item kind="ring" text="Sub bullet 2" />
                    </BulletList>
                  </Item>
                  <Item kind="disc" text="More bullets" />
                </BulletList>

                <Heading level={3}>Heading 3</Heading>
                <Paragraph $top={31}>
                  Text elements have been changed to draw attention to them:{" "}
                  <Strong>BOLD text looks like this</Strong>. <Em>Italics</Em>
                  <br />
                  <Em>looks like this</Em>. Equations look like this:{" "}
                  <Equation>
                    <i>y</i> = <i>b</i>
                    <sub>0</sub>
                    <i>x</i> + <i>b</i>
                    <sub>1</sub>
                  </Equation>
                  .
                </Paragraph>
                <Quote>Text call outs, or quote blocks, look like this.</Quote>

                <Heading level={4}>Heading 4</Heading>
                <Paragraph $top={26}>
                  Meanwhile, inline code looks like this: <InlineCode>pip install pandas</InlineCode>
                  <br />
                  And, code blocks look like this:
                </Paragraph>
                <CodeBlock>
                  <Token $tone="#66d9ef">import</Token> <Token $tone={color.teal}>pandas</Token>
                  {"\n\n"}
                  <Token $tone={color.teal}>y</Token> = <Token $tone="#ae81ff">5</Token>*
                  <Token $tone="#ae81ff">10</Token>{" "}
                  <Token $tone="#708090"># Example comment</Token>
                  {"\n\n"}
                  <Token $tone="#66d9ef">if</Token> (<Token $tone="#ae81ff">True</Token>):
                  {"\n    "}
                  <Token $tone="#66d9ef">print</Token>(
                  <Token $tone="#a6e22e">"Hello World"</Token>)
                </CodeBlock>

                <Heading level={5}>Heading 5</Heading>
              </Article>
              <NoteThumb />
            </NoteScroll>
            <EdgeShade />
          </NotePane>

          <GraphPane>
            <GraphHeader>
              <NetworkIcon size={28} />
              Graph view
            </GraphHeader>
            <GraphCanvas>
              <Graph />
              <GraphControls>
                {["Filters", "Display", "Forces"].map((label) => (
                  <ControlButton key={label}>
                    <Triangle dir="right" />
                    {label}
                  </ControlButton>
                ))}
              </GraphControls>
            </GraphCanvas>
          </GraphPane>

          <RightRibbon>
            <RibbonToggle aria-label="Expand right sidebar">
              <ChevronLeft />
            </RibbonToggle>
          </RightRibbon>
        </Body>

        <Footer>
          <WideThumb />
          <Status>
            <StatusItem $gap={0}>0 backlinks</StatusItem>
            <StatusItem $gap={56}>132 words</StatusItem>
            <StatusItem $gap={18}>786 characters</StatusItem>
          </Status>
        </Footer>
      </Window>
    </>
  );
}
